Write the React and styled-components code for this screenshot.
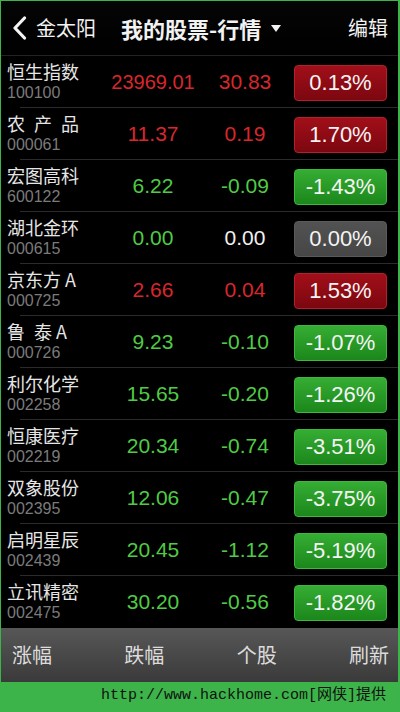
import React from "react";
import styled, { createGlobalStyle } from "styled-components";

const Global = createGlobalStyle`
  html, body { margin: 0; padding: 0; background: #3cb44a; }
  body { width: 400px; height: 712px; overflow: hidden; }
`;

const CJK = `"Noto Sans CJK SC", "Noto Sans", sans-serif`;
const NUM = `"Liberation Sans", Arial, "Noto Sans CJK SC", sans-serif`;

const Frame = styled.div`
  width: 400px;
  height: 712px;
  box-sizing: border-box;
  background: #3cb44a;
  padding: 1px 2px 0 1px;
  display: flex;
  flex-direction: column;
`;

const Screen = styled.div`
  background: #000;
  display: flex;
  flex-direction: column;
`;

const Header = styled.header`
  height: 54px;
  display: flex;
  align-items: center;
  padding: 0 10px 0 11px;
  border-bottom: 1px solid #222;
  background: linear-gradient(#050505, #000);
  color: #f2f2f2;
  font-family: ${CJK};
`;

const Back = styled.div`
  display: flex;
  align-items: center;
  gap: 9px;
  font-size: 20px;
  line-height: 24px;
`;

const Title = styled.div`
  margin-left: 25px;
  display: flex;
  align-items: center;
  font-size: 22px;
  font-weight: 700;
  line-height: 26px;
`;

const Caret = styled.span`
  margin-left: 10px;
  width: 0;
  height: 0;
  border-left: 5px solid transparent;
  border-right: 5px solid transparent;
  border-top: 7px solid #f2f2f2;
`;

const Edit = styled.div`
  margin-left: auto;
  font-size: 20px;
  line-height: 24px;
`;

const List = styled.div`
  display: flex;
  flex-direction: column;
`;

const Row = styled.div`
  height: 52px;
  box-sizing: border-box;
  display: grid;
  grid-template-columns: 99px 94px 90px 97px;
  align-items: center;
  padding-left: 6px;
  background: ${(p) =>
    p.$last
      ? "none"
      : "linear-gradient(#2b2b2b, #2b2b2b) no-repeat 19px 100% / calc(100% - 19px) 1px"};
`;

const NameCell = styled.div`
  align-self: start;
  padding-top: 4px;
  display: flex;
  flex-direction: column;
  gap: 2px;
`;

const Name = styled.div`
  font-family: ${CJK};
  font-size: 18px;
  line-height: 22px;
  color: #e6e6e6;
  white-space: pre;
`;

const Code = styled.div`
  font-family: ${NUM};
  font-size: 16px;
  line-height: 18px;
  color: #7b7b7b;
`;

const colors = { up: "#d9262c", down: "#4fcb45", flat: "#f0f0f0" };

const Value = styled.div`
  font-family: ${NUM};
  font-size: ${(p) => p.$size}px;
  line-height: 26px;
  text-align: center;
  color: ${(p) => colors[p.$tone]};
`;

const badgeBg = {
  up: "linear-gradient(#a10f19, #7c0710)",
  down: "linear-gradient(#35ad33, #1b871b)",
  flat: "linear-gradient(#525252, #464646)",
};
const badgeBorder = { up: "#b3222a", down: "#3fb83d", flat: "#5a5a5a" };

const Badge = styled.div`
  justify-self: end;
  align-self: start;
  margin-top: 9px;
  width: 93px;
  height: 36px;
  box-sizing: border-box;
  border-radius: 4px;
  border: 1px solid ${(p) => badgeBorder[p.$tone]};
  background: ${(p) => badgeBg[p.$tone]};
  display: flex;
  align-items: center;
  justify-content: center;
  font-family: ${NUM};
  font-size: 22px;
  color: #f4f4f4;
`;

const TabBar = styled.nav`
  height: 54px;
  display: flex;
  align-items: center;
  justify-content: space-between;
  padding: 0 9px 0 11px;
  background: linear-gradient(#575757, #3a3a3a);
`;

const Tab = styled.div`
  font-family: ${CJK};
  font-size: 20px;
  line-height: 24px;
  color: #dcdcdc;
`;

const Credit = styled.div`
  height: 31px;
  box-sizing: border-box;
  padding: 4px 12px 0 0;
  text-align: right;
  font-family: "Liberation Mono", "Noto Sans CJK SC", monospace;
  font-size: 15px;
  line-height: 20px;
  color: #111;
`;

const stocks = [
  ["恒生指数", "100100", "23969.01", "30.83", "0.13%", "up", "up", "up"],
  ["农\u2002产\u2002品", "000061", "11.37", "0.19", "1.70%", "up", "up", "up"],
  ["宏图高科", "600122", "6.22", "-0.09", "-1.43%", "down", "down", "down"],
  ["湖北金环", "000615", "0.00", "0.00", "0.00%", "down", "flat", "flat"],
  ["京东方 A", "000725", "2.66", "0.04", "1.53%", "up", "up", "up"],
  ["鲁\u2002泰 A", "000726", "9.23", "-0.10", "-1.07%", "down", "down", "down"],
  ["利尔化学", "002258", "15.65", "-0.20", "-1.26%", "down", "down", "down"],
  ["恒康医疗", "002219", "20.34", "-0.74", "-3.51%", "down", "down", "down"],
  ["双象股份", "002395", "12.06", "-0.47", "-3.75%", "down", "down", "down"],
  ["启明星辰", "002439", "20.45", "-1.12", "-5.19%", "down", "down", "down"],
  ["立讯精密", "002475", "30.20", "-0.56", "-1.82%", "down", "down", "down"],
];

export default function App() {
  return (
    <>
      <Global />
      <Frame>
        <Screen>
          <Header>
            <Back>
              <svg width="15" height="24" viewBox="0 0 15 24">
                <path d="M12.5 2 L3 12 L12.5 22" fill="none" stroke="#f4f4f4" strokeWidth="3.2" strokeLinecap="round" strokeLinejoin="round" />
              </svg>
              <span>金太阳</span>
            </Back>
            <Title>
              我的股票-行情
              <Caret />
            </Title>
            <Edit>编辑</Edit>
          </Header>
          <List>
            {stocks.map(([name, code, price, chg, pct, pTone, cTone, bTone], i) => (
              <Row key={code} $last={i === stocks.length - 1}>
                <NameCell>
                  <Name>{name}</Name>
                  <Code>{code}</Code>
                </NameCell>
                <Value $tone={pTone} $size={price.length > 6 ? 20 : 21}>{price}</Value>
                <Value $tone={cTone} $size={21}>{chg}</Value>
                <Badge $tone={bTone}>{pct}</Badge>
              </Row>
            ))}
          </List>
          <TabBar>
            <Tab>涨幅</Tab>
            <Tab>跌幅</Tab>
            <Tab>个股</Tab>
            <Tab>刷新</Tab>
          </TabBar>
        </Screen>
        <Credit>http://www.hackhome.com[网侠]提供</Credit>
      </Frame>
    </>
  );
}
